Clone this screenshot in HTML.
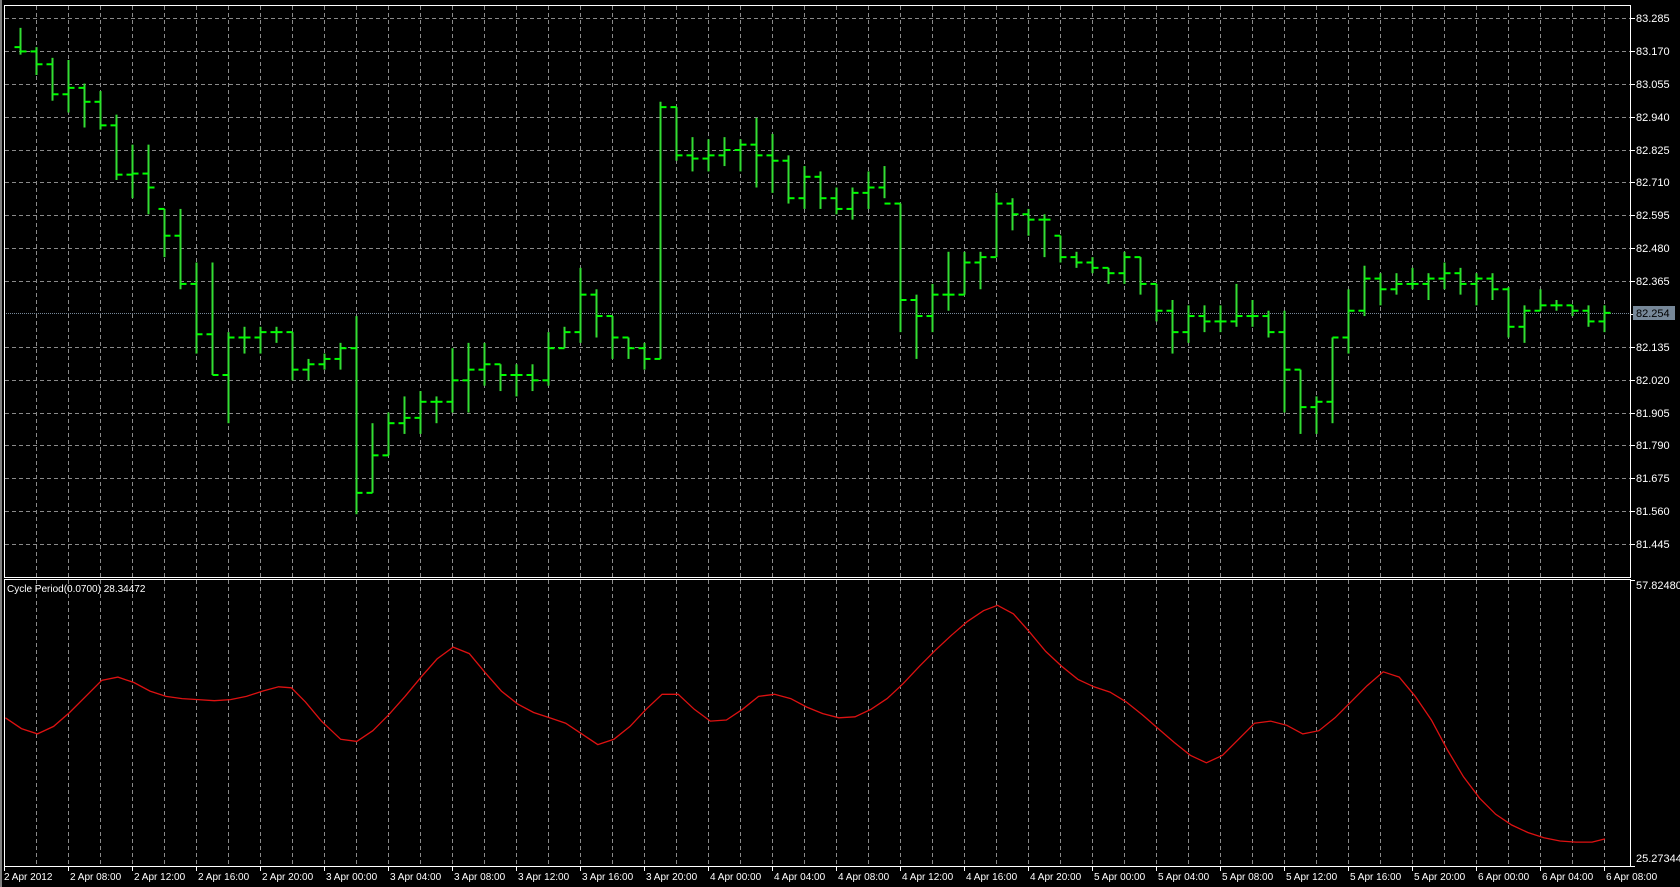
<!DOCTYPE html>
<html><head><meta charset="utf-8"><style>
html,body{margin:0;padding:0;background:#000;width:1680px;height:887px;overflow:hidden}
svg{display:block}
text{font-family:"Liberation Sans",sans-serif;font-size:11px;fill:#fff}
</style></head><body>
<svg id="s" width="1680" height="887" xmlns="http://www.w3.org/2000/svg">
<rect x="0" y="0" width="1680" height="887" fill="#000"/>
<rect x="0" y="0" width="2" height="887" fill="#808080"/>
<g id="grid"></g>
<line x1="4" y1="313.5" x2="1630" y2="313.5" stroke="#778899" stroke-width="1" stroke-dasharray="1,1"/>
<g id="bars"></g>
<g id="ind"></g>
<g fill="none" stroke="#fff" stroke-width="1">
<rect x="4.5" y="5.5" width="1626" height="572"/>
<rect x="4.5" y="579.5" width="1626" height="287"/>
</g>
<g id="lab"></g>
<rect x="1633" y="306" width="42" height="14" fill="#778899"/>
<text x="1636" y="317" style="fill:#000">82.254</text>
<text x="7" y="592" style="font-size:10px">Cycle Period(0.0700) 28.34472</text>
</svg>
<script>
var NS="http://www.w3.org/2000/svg",S=1.0714;
function el(p,t,a,txt){var e=document.createElementNS(NS,t);for(var k in a)e.setAttribute(k,a[k]);if(txt)e.textContent=txt;p.appendChild(e);return e;}
var g=document.getElementById('grid'),lab=document.getElementById('lab');
for(var x=36;x<=1604;x+=32){el(g,'line',{x1:x+.5,y1:6,x2:x+.5,y2:577,stroke:'#8a8a8a','stroke-dasharray':'4,3'});el(g,'line',{x1:x+.5,y1:580,x2:x+.5,y2:866,stroke:'#8a8a8a','stroke-dasharray':'4,3'});}
var prices=["83.285","83.170","83.055","82.940","82.825","82.710","82.595","82.480","82.365","82.250","82.135","82.020","81.905","81.790","81.675","81.560","81.445"];
for(var k=0;k<17;k++){var y=Math.round(18+32.88*k);
 if(k!=9)el(g,'line',{x1:5,y1:y+.5,x2:1630,y2:y+.5,stroke:'#8a8a8a','stroke-dasharray':'4,3'});
 el(lab,'line',{x1:1630,y1:y+.5,x2:1635,y2:y+.5,stroke:'#fff'});
 if(k!=9)el(lab,'text',{x:1636,y:y+4},prices[k]);}
el(lab,'line',{x1:1630,y1:580.5,x2:1635,y2:580.5,stroke:'#fff'});
el(lab,'text',{x:1636,y:589},"57.82480");
el(lab,'line',{x1:1630,y1:866.5,x2:1635,y2:866.5,stroke:'#fff'});
el(lab,'text',{x:1636,y:862},"25.27344");
var tl=["2 Apr 2012","2 Apr 08:00","2 Apr 12:00","2 Apr 16:00","2 Apr 20:00","3 Apr 00:00","3 Apr 04:00","3 Apr 08:00","3 Apr 12:00","3 Apr 16:00","3 Apr 20:00","4 Apr 00:00","4 Apr 04:00","4 Apr 08:00","4 Apr 12:00","4 Apr 16:00","4 Apr 20:00","5 Apr 00:00","5 Apr 04:00","5 Apr 08:00","5 Apr 12:00","5 Apr 16:00","5 Apr 20:00","6 Apr 00:00","6 Apr 04:00","6 Apr 08:00"];
for(var i=0;i<tl.length;i++){var x=4+64*i;el(lab,'line',{x1:x+.5,y1:866,x2:x+.5,y2:871,stroke:'#fff'});el(lab,'text',{x:x+(i?2:0),y:880,style:'font-size:10px'},tl[i]);}
var d=[[26,51,48],[44,70,60],[54,94,88],[56,105,82],[78,119,95],[85,121,117],[107,168,163],[135,185,162],[135,200,175],[195,240,220],[195,270,265],[245,330,312],[245,350,350],[310,395,315],[305,330,315],[305,330,310],[305,320,310],[310,355,345],[335,355,340],[330,345,335],[320,345,325],[295,480,460],[395,460,425],[385,425,395],[370,405,390],[365,405,375],[370,395,375],[325,385,355],[320,385,345],[320,360,340],[340,365,350],[340,370,350],[340,365,355],[310,360,325],[305,325,310],[250,320,275],[270,315,295],[295,335,315],[315,335,325],[320,345,335],[95,335,100],[100,150,145],[128,160,148],[130,160,145],[128,155,140],[130,160,135],[110,175,145],[125,180,150],[145,190,185],[155,195,165],[160,195,185],[175,200,195],[175,205,180],[160,195,175],[155,185,190],[190,310,280],[275,335,295],[265,310,275],[235,290,275],[235,275,245],[235,270,240],[180,240,190],[185,215,200],[195,220,205],[200,240,205],[220,245,240],[235,250,245],[240,255,250],[250,265,255],[235,265,240],[240,275,265],[265,300,290],[280,330,310],[285,320,295],[285,310,300],[285,310,300],[265,305,295],[280,305,295],[290,315,310],[290,385,345],[345,405,380],[370,405,375],[315,395,315],[270,330,290],[248,295,260],[255,285,270],[255,275,265],[250,270,265],[255,280,260],[245,270,255],[250,275,265],[255,285,260],[255,280,270],[268,315,305],[285,320,290],[270,290,285],[280,290,285],[285,295,290],[285,305,300],[285,310,292]];
var b=document.getElementById('bars'),pc=44;
for(var i=0;i<d.length;i++){var h=d[i][0],l=d[i][1],c=d[i][2],o=Math.min(Math.max(pc,h),l);pc=c;
 var x=20+16*i+.5;
 el(b,'line',{x1:x,y1:h*S,x2:x,y2:l*S,stroke:'#33dd33','stroke-width':2});
 el(b,'line',{x1:x-6,y1:o*S,x2:x,y2:o*S,stroke:'#00ff00','stroke-width':2});
 el(b,'line',{x1:x,y1:c*S,x2:x+6,y2:c*S,stroke:'#00ff00','stroke-width':2});}
var r=[[5,670],[20,680],[35,685],[50,678],[65,665],[80,650],[95,635],[110,632],[125,637],[140,645],[155,650],[170,652],[185,653],[200,654],[215,653],[230,650],[245,645],[260,641],[272,642],[285,655],[300,673],[318,690],[333,692],[348,682],[363,667],[378,650],[393,632],[408,615],[423,604],[438,610],[453,628],[468,645],[483,657],[498,665],[513,670],[528,675],[543,685],[558,695],[573,690],[588,678],[603,662],[618,648],[633,648],[648,662],[663,673],[678,672],[693,662],[708,650],[723,648],[738,652],[753,660],[768,666],[783,670],[798,669],[813,662],[828,652],[843,638],[858,622],[873,607],[888,593],[903,580],[918,570],[931,565],[946,573],[961,590],[976,608],[991,622],[1006,634],[1021,641],[1036,646],[1051,655],[1066,667],[1081,680],[1096,693],[1111,705],[1126,712],[1141,705],[1156,690],[1171,675],[1186,673],[1201,677],[1216,685],[1231,682],[1246,670],[1261,655],[1276,640],[1291,627],[1306,632],[1321,650],[1336,672],[1351,700],[1366,725],[1381,745],[1396,760],[1411,770],[1426,777],[1441,782],[1456,785],[1471,786],[1486,786],[1498,783]];
var pts=r.map(function(p){return (p[0]*S).toFixed(1)+','+(p[1]*S).toFixed(1)}).join(' ');
el(document.getElementById('ind'),'polyline',{points:pts,fill:'none',stroke:'#dd1111','stroke-width':1.3});
</script>
</body></html>
